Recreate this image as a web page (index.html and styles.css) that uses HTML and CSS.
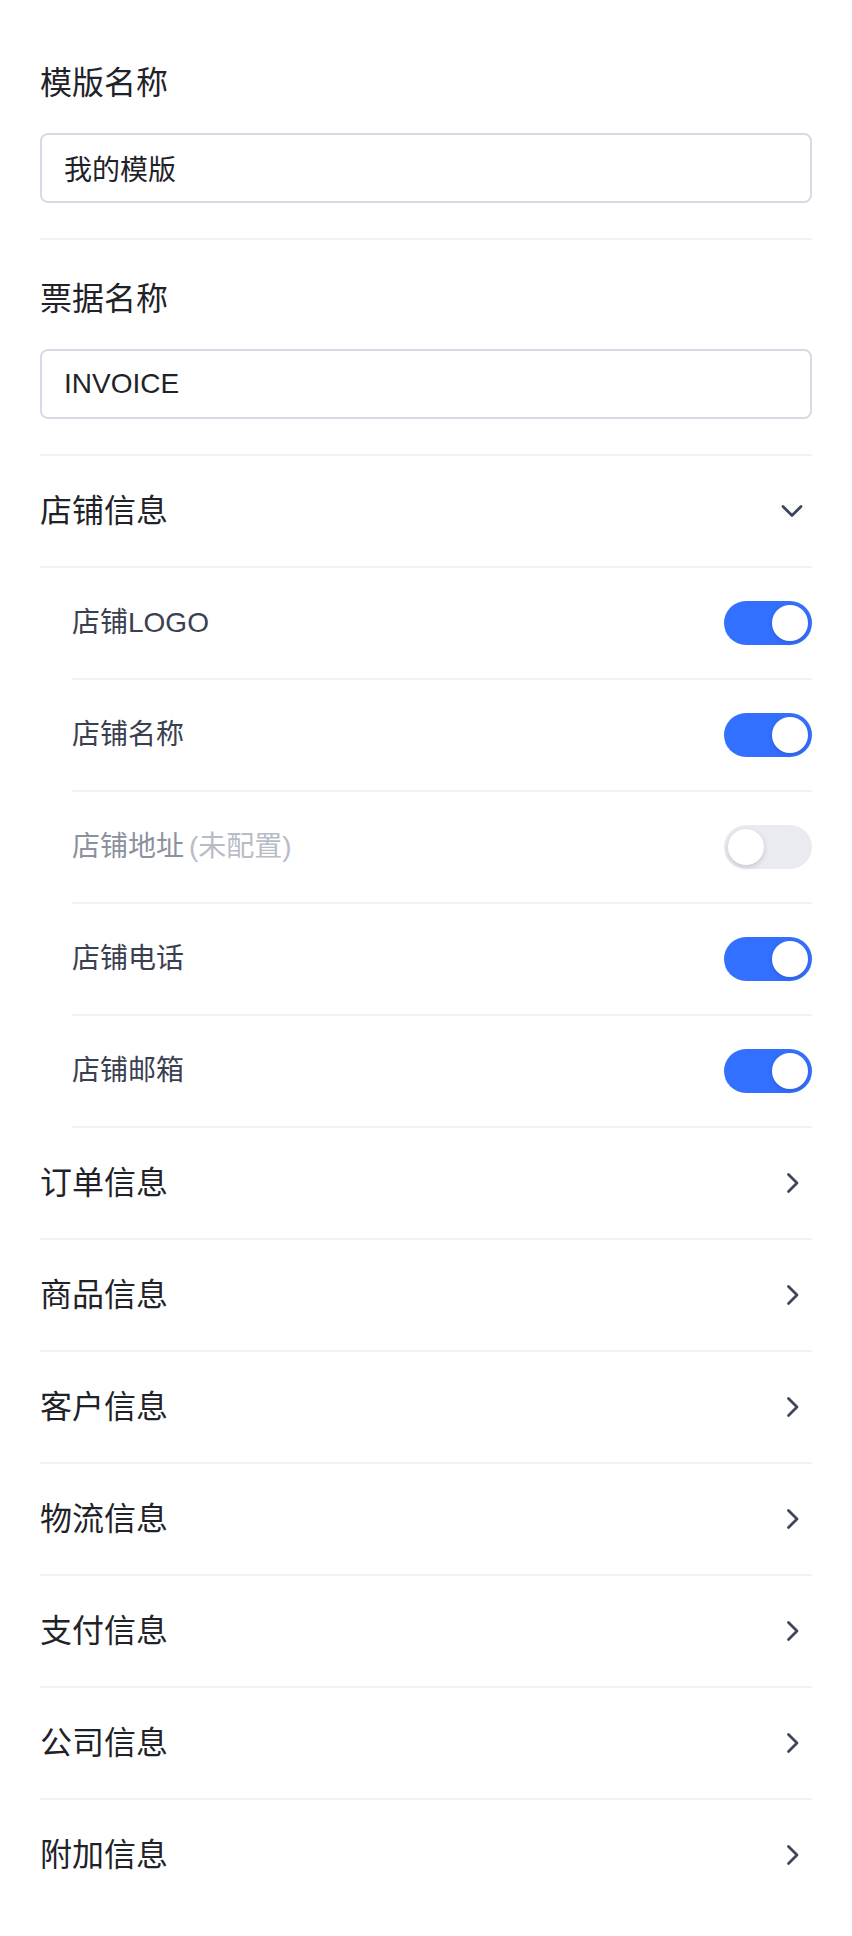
FILE: index.html
```html
<!DOCTYPE html>
<html lang="zh">
<head>
<meta charset="utf-8">
<title>模版设置</title>
<link rel="stylesheet" href="styles.css">
</head>
<body>
<div class="page">
  <div class="field">
    <div class="field-title">模版名称</div>
    <div class="input">我的模版</div>
  </div>
  <div class="field">
    <div class="field-title">票据名称</div>
    <div class="input">INVOICE</div>
  </div>

  <div class="row">
    <span class="row-title">店铺信息</span>
    <svg class="chev" viewBox="0 0 24 24"><path d="M3 7.5 L12 16.5 L21 7.5"/></svg>
  </div>
  <div class="sub">
    <div class="sub-row">
      <span class="sub-label">店铺LOGO</span>
      <span class="toggle on"><span class="knob"></span></span>
    </div>
    <div class="sub-row">
      <span class="sub-label">店铺名称</span>
      <span class="toggle on"><span class="knob"></span></span>
    </div>
    <div class="sub-row">
      <span class="sub-label disabled">店铺地址<span class="hint">(未配置)</span></span>
      <span class="toggle off"><span class="knob"></span></span>
    </div>
    <div class="sub-row">
      <span class="sub-label">店铺电话</span>
      <span class="toggle on"><span class="knob"></span></span>
    </div>
    <div class="sub-row">
      <span class="sub-label">店铺邮箱</span>
      <span class="toggle on"><span class="knob"></span></span>
    </div>
  </div>

  <div class="row">
    <span class="row-title">订单信息</span>
    <svg class="chev" viewBox="0 0 24 24"><path d="M8.5 3.5 L17 12 L8.5 20.5"/></svg>
  </div>
  <div class="row">
    <span class="row-title">商品信息</span>
    <svg class="chev" viewBox="0 0 24 24"><path d="M8.5 3.5 L17 12 L8.5 20.5"/></svg>
  </div>
  <div class="row">
    <span class="row-title">客户信息</span>
    <svg class="chev" viewBox="0 0 24 24"><path d="M8.5 3.5 L17 12 L8.5 20.5"/></svg>
  </div>
  <div class="row">
    <span class="row-title">物流信息</span>
    <svg class="chev" viewBox="0 0 24 24"><path d="M8.5 3.5 L17 12 L8.5 20.5"/></svg>
  </div>
  <div class="row">
    <span class="row-title">支付信息</span>
    <svg class="chev" viewBox="0 0 24 24"><path d="M8.5 3.5 L17 12 L8.5 20.5"/></svg>
  </div>
  <div class="row">
    <span class="row-title">公司信息</span>
    <svg class="chev" viewBox="0 0 24 24"><path d="M8.5 3.5 L17 12 L8.5 20.5"/></svg>
  </div>
  <div class="row last">
    <span class="row-title">附加信息</span>
    <svg class="chev" viewBox="0 0 24 24"><path d="M8.5 3.5 L17 12 L8.5 20.5"/></svg>
  </div>
</div>
</body>
</html>
```

FILE: styles.css
```css
html, body {
  margin: 0;
  padding: 0;
  background: #ffffff;
}

body {
  font-family: "Liberation Sans", "Noto Sans CJK SC", sans-serif;
  color: #1f2329;
}

.page {
  padding: 24px 40px 0 40px;
}

.field {
  padding: 35px 0 35px 0;
  border-bottom: 2px solid #eff1f5;
}

.field-title {
  font-size: 32px;
  line-height: 48px;
  color: #1f2329;
  margin-bottom: 26px;
}

.input {
  box-sizing: border-box;
  height: 70px;
  border: 2px solid #d6dae6;
  border-radius: 8px;
  padding: 0 22px;
  display: flex;
  align-items: center;
  font-size: 28px;
  color: #1f2329;
}

.row {
  height: 110px;
  display: flex;
  align-items: center;
  justify-content: space-between;
  border-bottom: 2px solid #eff1f5;
}

.row.last {
  border-bottom: none;
}

.row-title {
  font-size: 32px;
  line-height: 48px;
  color: #1f2329;
}

.chev {
  width: 24px;
  height: 24px;
  margin-right: 8px;
  fill: none;
  stroke: #3d4557;
  stroke-width: 2.8;
  stroke-linecap: round;
  stroke-linejoin: round;
}

.sub {
  margin-left: 32px;
}

.sub-row {
  height: 110px;
  display: flex;
  align-items: center;
  justify-content: space-between;
  border-bottom: 2px solid #eff1f5;
}

.sub-label {
  font-size: 28px;
  line-height: 40px;
  color: #3b4050;
}

.sub-label.disabled {
  color: #8c919e;
}

.hint {
  color: #b8bcc6;
  margin-left: 5px;
}

.toggle {
  box-sizing: border-box;
  width: 88px;
  height: 44px;
  border-radius: 22px;
  padding: 4px;
  display: flex;
  align-items: center;
}

.toggle.on {
  background: #3370ff;
  justify-content: flex-end;
}

.toggle.off {
  background: #e9ebf0;
  justify-content: flex-start;
}

.knob {
  width: 36px;
  height: 36px;
  border-radius: 50%;
  background: #ffffff;
  box-shadow: 0 2px 5px rgba(20, 30, 60, 0.18);
}
```
